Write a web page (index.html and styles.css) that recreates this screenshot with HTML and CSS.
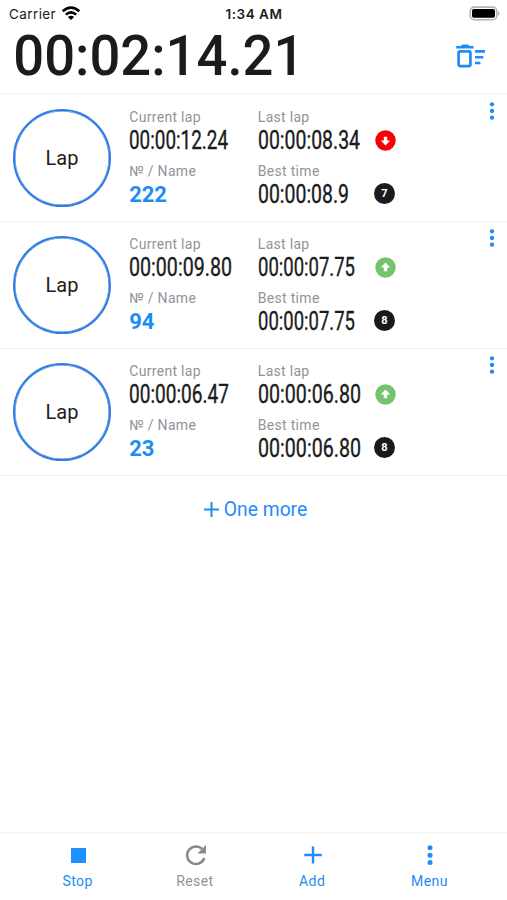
FILE: index.html
```html
<!DOCTYPE html>
<html lang="en">
<head>
<meta charset="utf-8">
<title>Lap timer</title>
<link rel="stylesheet" href="styles.css">
</head>
<body>
<svg class="defs" width="0" height="0" aria-hidden="true">
  <symbol id="dots" viewBox="0 0 6 20"><circle cx="3" cy="2.6" r="2.4"/><circle cx="3" cy="10" r="2.4"/><circle cx="3" cy="17.4" r="2.4"/></symbol>
  <symbol id="arrow" viewBox="0 0 21 21"><circle cx="10.5" cy="10.5" r="10.2"/><path fill="#fff" d="M10.5 5.600l4.700 4.900h-3v3.700H8.800v-3.700h-3z"/></symbol>
</svg>
<div class="screen">
  <div class="status">
    <div class="carrier">Carrier
      <svg width="20" height="15" viewBox="0 0 20 15"><g fill="none" stroke="#000" stroke-width="2.600"><path d="M1.700 5.300Q10-2 18.300 5.300"/><path d="M4.800 8.600Q10 4 15.200 8.600"/></g><path d="M10 14L6.900 10.900Q10 8.400 13.100 10.900z"/></svg>
    </div>
    <div class="clock">1:34 AM</div>
    <svg class="battery" width="31" height="15" viewBox="0 0 31 15"><rect x="1.200" y="1.100" width="26.600" height="12.600" rx="4" fill="#fff" stroke="#b5b5b5" stroke-width="1.600"/><rect x="3" y="3" width="23" height="8.800" rx="1.800"/><path fill="#b5b5b5" d="M29 5q3 2.400 0 4.800z"/></svg>
  </div>
  <header class="head">
    <svg width="292" height="58"><text class="total" x="13.300" y="47.700" textLength="291" lengthAdjust="spacingAndGlyphs">00:02:14.21</text></svg>
    <svg class="trash" width="30" height="24" viewBox="0 0 30 24" fill="#1e8cf5"><path d="M.2 2h4.500L6.500.4h5.500L13.700 2h3.800v2.600H.2z"/><rect x="2.600" y="7.300" width="11.800" height="14.800" rx="1.500" fill="none" stroke="#1e8cf5" stroke-width="2.700"/><path d="M19 6.100h10v2.700H19zM19 11.900h8.300v2.700H19zM19 17.700h5.400v2.600H19z"/></svg>
  </header>
  <main>
    <section class="row">
      <button class="lap">Lap</button>
      <div class="col first">
        <div class="label">Current lap</div>
        <svg class="time" width="106" height="28"><text x="0" y="17.900" textLength="99" lengthAdjust="spacingAndGlyphs">00:00:12.24</text></svg>
        <div class="label">№ / Name</div>
        <div class="name">222</div>
      </div>
      <div class="col">
        <div class="label">Last lap</div>
        <svg class="time" width="106" height="28"><text x="0" y="17.900" textLength="102" lengthAdjust="spacingAndGlyphs">00:00:08.34</text></svg>
        <div class="label">Best time</div>
        <svg class="time" width="106" height="28"><text x="0" y="17.900" textLength="91" lengthAdjust="spacingAndGlyphs">00:00:08.9</text></svg>
      </div>
      <div class="marks"><svg class="mark down"><use href="#arrow"/></svg><span class="count">7</span></div>
      <svg class="more"><use href="#dots"/></svg>
    </section>
    <section class="row">
      <button class="lap">Lap</button>
      <div class="col first">
        <div class="label">Current lap</div>
        <svg class="time" width="106" height="28"><text x="0" y="17.900" textLength="103" lengthAdjust="spacingAndGlyphs">00:00:09.80</text></svg>
        <div class="label">№ / Name</div>
        <div class="name">94</div>
      </div>
      <div class="col">
        <div class="label">Last lap</div>
        <svg class="time" width="106" height="28"><text x="0" y="17.900" textLength="97" lengthAdjust="spacingAndGlyphs">00:00:07.75</text></svg>
        <div class="label">Best time</div>
        <svg class="time" width="106" height="28"><text x="0" y="17.900" textLength="97" lengthAdjust="spacingAndGlyphs">00:00:07.75</text></svg>
      </div>
      <div class="marks"><svg class="mark"><use href="#arrow"/></svg><span class="count">8</span></div>
      <svg class="more"><use href="#dots"/></svg>
    </section>
    <section class="row">
      <button class="lap">Lap</button>
      <div class="col first">
        <div class="label">Current lap</div>
        <svg class="time" width="106" height="28"><text x="0" y="17.900" textLength="100" lengthAdjust="spacingAndGlyphs">00:00:06.47</text></svg>
        <div class="label">№ / Name</div>
        <div class="name">23</div>
      </div>
      <div class="col">
        <div class="label">Last lap</div>
        <svg class="time" width="106" height="28"><text x="0" y="17.900" textLength="103" lengthAdjust="spacingAndGlyphs">00:00:06.80</text></svg>
        <div class="label">Best time</div>
        <svg class="time" width="106" height="28"><text x="0" y="17.900" textLength="103" lengthAdjust="spacingAndGlyphs">00:00:06.80</text></svg>
      </div>
      <div class="marks"><svg class="mark"><use href="#arrow"/></svg><span class="count">8</span></div>
      <svg class="more"><use href="#dots"/></svg>
    </section>
    <button class="add"><svg width="15" height="15" viewBox="0 0 15 15"><path d="M7.500 0v15M0 7.500h15" stroke="#1e8cf5" stroke-width="2"/></svg>One more</button>
  </main>
  <nav class="tabs">
    <div class="tab"><svg width="24" height="24"><path fill="#1e90ff" d="M5 5h15v15H5z"/></svg>Stop</div>
    <div class="tab off"><svg width="24" height="24" viewBox="0 0 24 24"><path fill="none" stroke="#88898c" stroke-width="2.500" d="M21.300 15A8.800 8.800 0 1 1 19.200 6"/><path fill="#88898c" d="M23 2v8.500h-8.500z"/></svg>Reset</div>
    <div class="tab"><svg width="24" height="24"><path d="M13 3.500v17M4.300 12h17.500" stroke="#1e8cf5" stroke-width="2.400"/></svg>Add</div>
    <div class="tab"><svg width="24" height="24"><g fill="#1e8cf5"><circle cx="13" cy="4.800" r="2.500"/><circle cx="13" cy="12.200" r="2.500"/><circle cx="13" cy="19.600" r="2.500"/></g></svg>Menu</div>
  </nav>
</div>
</body>
</html>
```
FILE: styles.css
```css
* { box-sizing: border-box; }
body { margin: 0; background: #fff; color: #1b1b1d; font-family: Roboto, sans-serif; }
button { border: 0; padding: 0; background: none; font: inherit; color: inherit; }
svg { display: block; flex: none; }
.defs { position: absolute; }
.screen { display: flex; flex-direction: column; height: 900px; overflow: hidden; }
.status { display: grid; grid-template-columns: 1fr auto 1fr; align-items: center; height: 27px; padding: 0 7px 0 9px; font: 13.500px Inter, sans-serif; }
.carrier { display: flex; align-items: center; gap: 5px; letter-spacing: .4px; }
.clock { font-weight: 600; font-size: 13.500px; letter-spacing: .5px; margin-left: -1px; }
.battery { justify-self: end; }
.head { display: flex; justify-content: space-between; height: 68px; border-bottom: 2px solid #f6f6f6; padding-right: 21px; }
.head > svg { overflow: visible; }
.trash { margin-top: 17px; }
.total { font-size: 55px; font-weight: 500; fill: #1b1b1d; }
.row { display: flex; height: 127px; padding: 14px 12px 0 13px; border-bottom: 1px solid #f3f3f3; }
.lap { width: 98px; height: 98px; border: 2px solid #2f7de1; box-shadow: inset 0 0 0 .5px #2f7de1; border-radius: 50%; font-size: 20px; }
.col { width: 116px; }
.first { width: 128.500px; margin-left: 18.300px; }
.label { height: 17px; line-height: 17px; font-size: 14px; letter-spacing: .3px; color: #919398; white-space: nowrap; }
.time { height: 37px; overflow: visible; }
.time text { font-size: 20px; fill: #1b1b1d; stroke: #1b1b1d; stroke-width: .3px; transform: scale(1, 1.27); }
.name { font-size: 22px; font-weight: 700; line-height: 30px; color: #1e8cf5; letter-spacing: -.1px; }
.marks { width: 26px; padding-top: 21px; }
.mark { width: 21px; height: 21px; margin-left: 1.700px; fill: #75c36d; }
.down { fill: #f90006; transform: rotate(180deg); }
.count { display: grid; place-items: center; width: 21px; height: 21px; margin: 32px 0 0; border-radius: 50%; background: #1b1b1d; color: #fff; font-size: 11px; line-height: 12px; font-weight: 700; }
.more { width: 6px; height: 18px; margin: -7px 0 0 auto; fill: #1e8cf5; }
.add { display: flex; align-items: center; justify-content: center; gap: 5px; width: 100%; height: 67px; padding-left: 4px; font-size: 19.300px; color: #1e8cf5; }
.tabs { display: grid; grid-template-columns: repeat(4, 117.300px); justify-content: center; height: 68px; margin-top: auto; padding-top: 9px; border-top: 2px solid #f6f6f6; color: #1e8cf5; font-size: 14px; letter-spacing: .4px; }
.tab { display: flex; flex-direction: column; align-items: center; gap: 6px; line-height: 17px; }
.off { color: #919398; }
```
